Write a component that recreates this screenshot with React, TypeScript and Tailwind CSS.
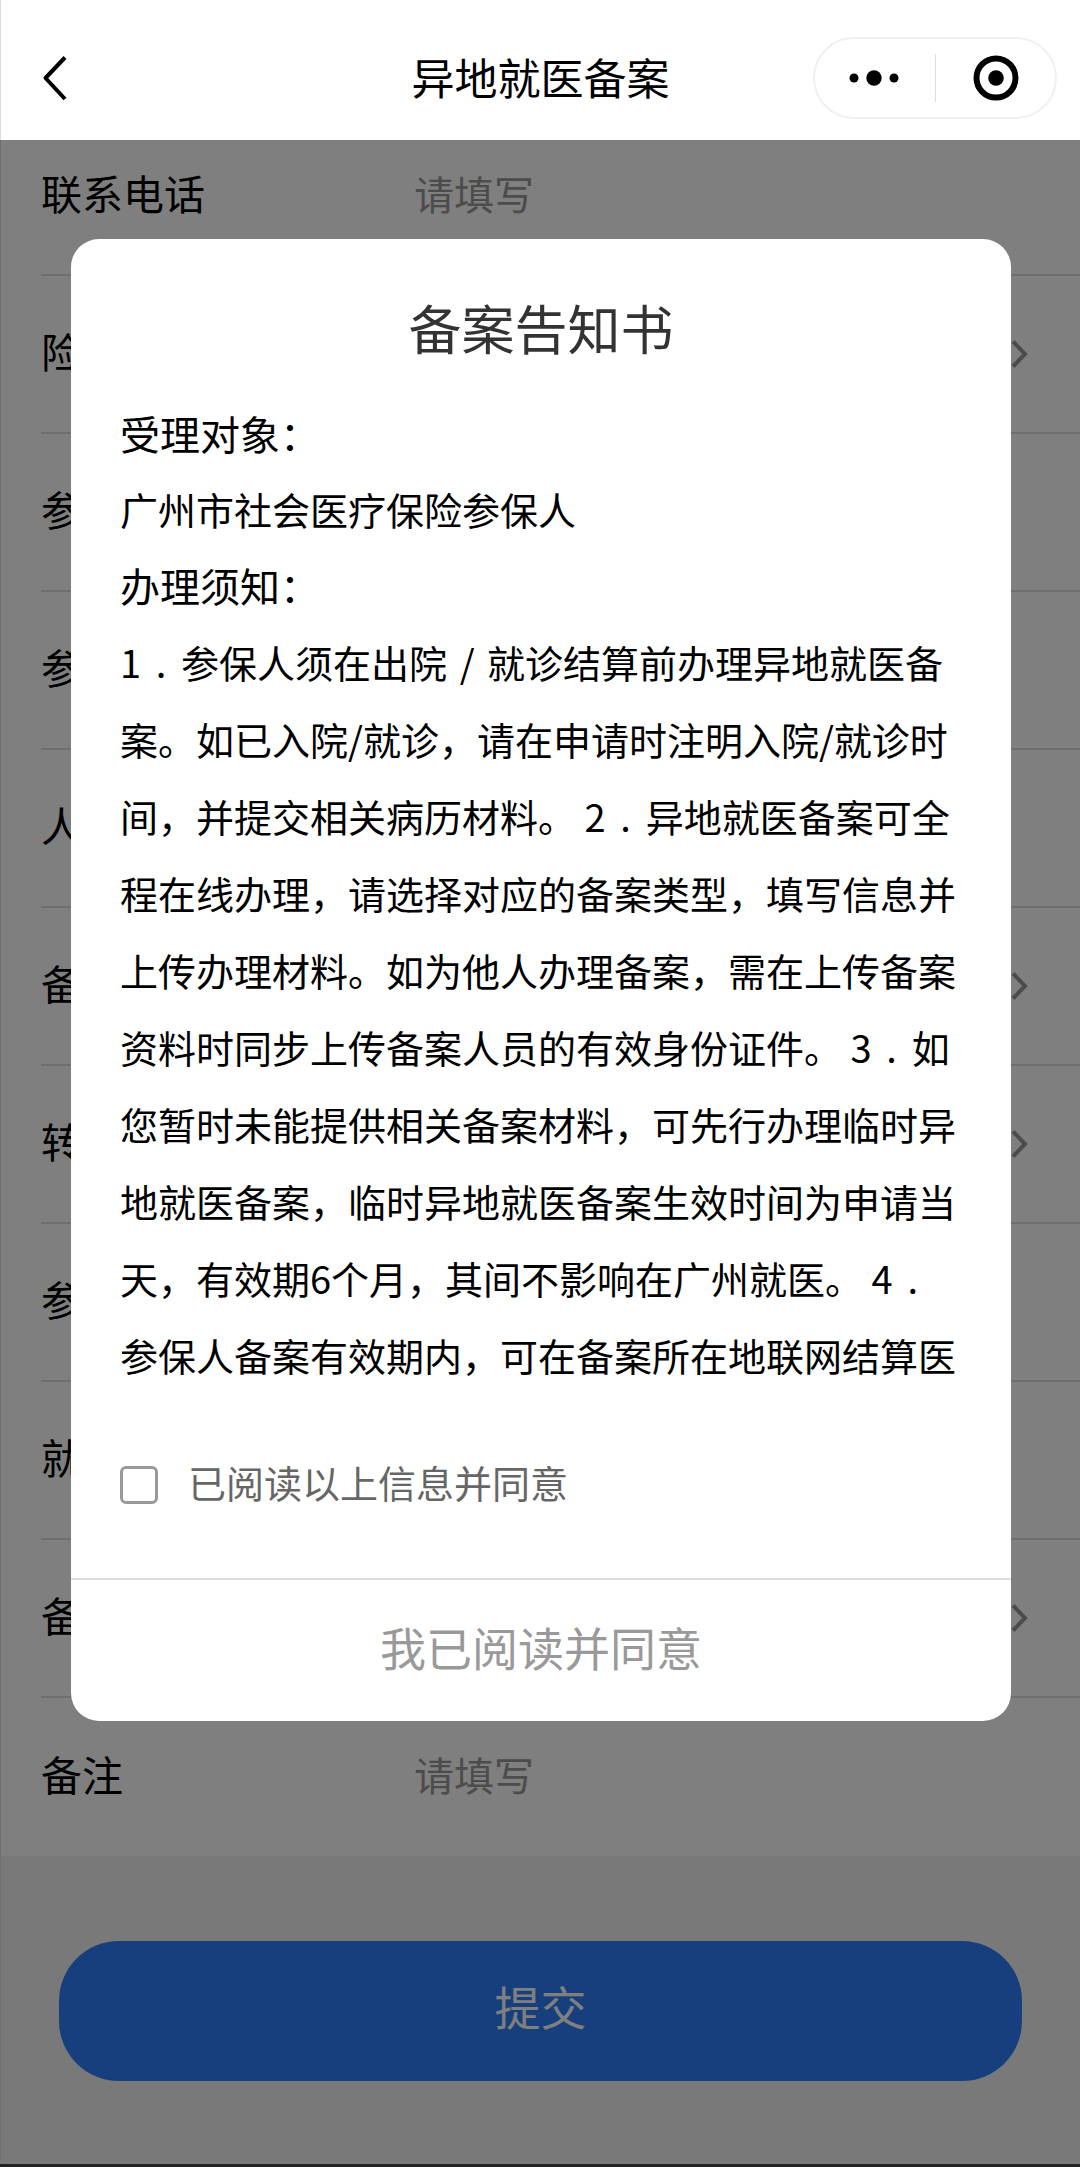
import { useState } from 'react'

type Field = {
  id: string
  label: string
  type: 'input' | 'select'
  placeholder?: string
}

const fields: Field[] = [
  { id: 'phone', label: '联系电话', type: 'input', placeholder: '请填写' },
  { id: 'insurance', label: '险种', type: 'select' },
  { id: 'insuredArea', label: '参保地', type: 'input' },
  { id: 'insuredUnit', label: '参保单位', type: 'input' },
  { id: 'personType', label: '人员类别', type: 'input' },
  { id: 'recordType', label: '备案类型', type: 'select' },
  { id: 'transferArea', label: '转往地区', type: 'select' },
  { id: 'insuredAddress', label: '参保地址', type: 'input' },
  { id: 'hospital', label: '就医医院', type: 'input' },
  { id: 'recordDate', label: '备案日期', type: 'select' },
  { id: 'remark', label: '备注', type: 'input', placeholder: '请填写' },
]

// Half-width mark centred in a full-width cell
const Mark = ({ children }: { children: string }) => (
  <span className="inline-block w-10 text-center">{children}</span>
)

const Header = () => (
  <header className="relative z-10 grid h-[140px] grid-cols-[1fr_auto_1fr] items-center border-l border-[#dcdcdc] bg-white px-[23px] pt-4">
    <button aria-label="返回" className="justify-self-start pl-4">
      <svg width="32" height="48" viewBox="0 0 32 48" fill="none" stroke="#000" strokeWidth="4">
        <path d="M25 3.5 5.5 24 25 45" strokeLinejoin="round" />
      </svg>
    </button>
    <h1 className="pb-1 text-[43px] leading-[60px] text-black">异地就医备案</h1>
    <div className="flex h-[82px] w-[244px] items-center justify-self-end rounded-full border-2 border-[#f0f0f0]">
      <button aria-label="更多" className="flex flex-1 items-center justify-center">
        <svg width="52" height="20" viewBox="0 0 52 20" fill="#000">
          <circle cx="5" cy="10" r="4.5" />
          <circle cx="25" cy="10" r="7.7" />
          <circle cx="45" cy="10" r="4.5" />
        </svg>
      </button>
      <span className="h-12 w-px bg-[#dedede]" />
      <button aria-label="关闭" className="flex flex-1 items-center justify-center">
        <svg width="48" height="48" viewBox="0 0 48 48">
          <circle cx="25" cy="24" r="19.5" fill="none" stroke="#000" strokeWidth="6" />
          <circle cx="25" cy="24" r="7.8" fill="#000" />
        </svg>
      </button>
    </div>
  </header>
)

const FieldRow = ({ field }: { field: Field }) => (
  <div className="ml-10 flex h-[158px] items-center border-b-2 border-[#dcdcdc] pr-[50px] last:border-b-0">
    <label htmlFor={field.id} className="w-[373px] shrink-0 pb-1.5 text-[41px] text-black">
      {field.label}
    </label>
    {field.type === 'input' ? (
      <input
        id={field.id}
        placeholder={field.placeholder}
        className="min-w-0 flex-1 bg-transparent pb-1.5 text-[40px] outline-none placeholder:text-[#999]"
      />
    ) : (
      <>
        <select id={field.id} className="min-w-0 flex-1 appearance-none bg-transparent text-[40px] outline-none">
          <option value=""></option>
        </select>
        <svg width="20" height="32" viewBox="0 0 20 32" fill="none" stroke="#999" strokeWidth="4">
          <path d="M3 3.5 15 16 3 28.5" />
        </svg>
      </>
    )}
  </div>
)

const App = () => {
  const [agreed, setAgreed] = useState(false)
  const [open, setOpen] = useState(true)

  return (
    <div
      lang="zh-CN"
      className="flex min-h-screen flex-col bg-[#f3f3f3] font-['Noto_Sans_CJK_SC',sans-serif]"
    >
      <Header />

      <main className="relative flex-1 border-b-3 border-[#222]">
        <form className="-mt-[22px] border-l border-[#dcdcdc]" onSubmit={(e) => e.preventDefault()}>
          <div className="bg-white">
            {fields.map((field) => (
              <FieldRow key={field.id} field={field} />
            ))}
          </div>
          <div className="px-[58px] pt-[85px] pb-20">
            <button
              type="submit"
              className="h-[140px] w-full rounded-[60px] bg-[#2f7ffa] pb-3 text-[46px] text-white"
            >
              提交
            </button>
          </div>
        </form>

        {open && (
          <div className="absolute inset-0 bg-black/50 pt-[99px] pr-[69px] pl-[71px]">
            <div
              role="dialog"
              aria-modal="true"
              aria-labelledby="notice-title"
              className="overflow-hidden rounded-[28px] bg-white"
            >
              <div className="px-[49px] pt-12 pb-[74px]">
                <h2 id="notice-title" className="text-center text-[53px] leading-[80px] text-[#333]">
                  备案告知书
                </h2>

                <div className="mt-7 text-[38px] leading-[76px] text-black">
                  <h3 className="text-[40px]">受理对象：</h3>
                  <p>广州市社会医疗保险参保人</p>
                  <h3 className="text-[40px]">办理须知：</h3>
                  <p className="leading-[77px]">
                    1<Mark>.</Mark>参保人须在出院<Mark>/</Mark>就诊结算前办理异地就医备案。如已入院/就诊，请在申请时注明入院/就诊时间，并提交相关病历材料。
                    {' '}2<Mark>.</Mark>异地就医备案可全程在线办理，请选择对应的备案类型，填写信息并上传办理材料。如为他人办理备案，需在上传备案资料时同步上传备案人员的有效身份证件。
                    {' '}3<Mark>.</Mark>如您暂时未能提供相关备案材料，可先行办理临时异地就医备案，临时异地就医备案生效时间为申请当天，有效期6个月，其间不影响在广州就医。
                    {' '}4<Mark>.</Mark>参保人备案有效期内，可在备案所在地联网结算医
                  </p>
                </div>

                <label className="mt-[73px] flex h-[38px] items-center gap-[30px] text-[38px] text-[#666]">
                  <input
                    type="checkbox"
                    checked={agreed}
                    onChange={(e) => setAgreed(e.target.checked)}
                    className="size-[38px] appearance-none rounded-md border-3 border-[#999] checked:border-[#2f7ffa] checked:bg-[#2f7ffa]"
                  />
                  <span className="pb-2">已阅读以上信息并同意</span>
                </label>
              </div>

              <button
                disabled={!agreed}
                onClick={() => setOpen(false)}
                className="h-[143px] w-full border-t-2 border-[#ddd] pb-2 text-[46px] text-[#2f7ffa] disabled:text-[#999]"
              >
                我已阅读并同意
              </button>
            </div>
          </div>
        )}
      </main>
    </div>
  )
}

export default App
